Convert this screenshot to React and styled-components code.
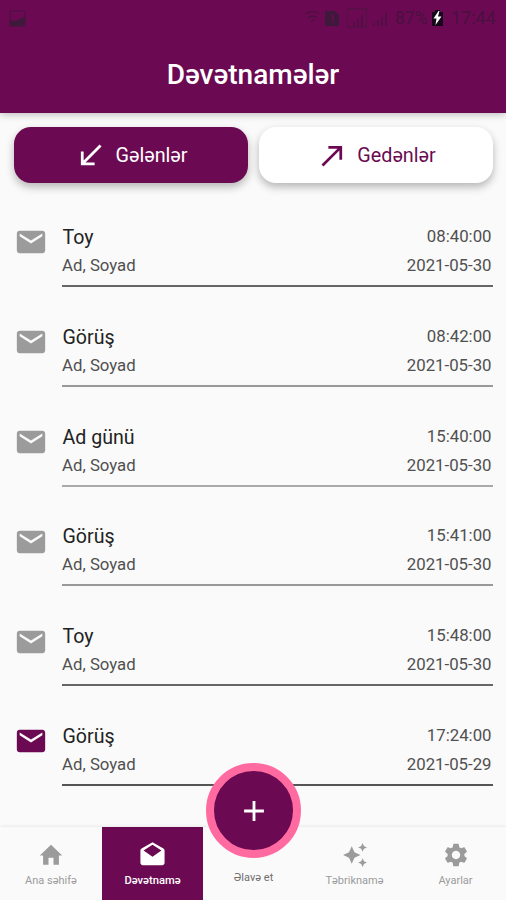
import React from "react";
import styled, { createGlobalStyle } from "styled-components";

const PLUM = "#6b0a52";

const GlobalStyle = createGlobalStyle`
  *, *::before, *::after { box-sizing: border-box; }
  html, body { margin: 0; padding: 0; background: #fafafa; }
  body { font-family: Roboto, "Noto Sans", sans-serif; }
`;

const Screen = styled.div`
  position: relative;
  display: flex;
  flex-direction: column;
  width: 506px;
  height: 900px;
  overflow: hidden;
  background: #fafafa;
`;

const Header = styled.header`
  flex: none;
  height: 113px;
  background: ${PLUM};
  box-shadow: 0 1px 8px rgba(0, 0, 0, 0.28);
`;

const StatusBar = styled.div`
  display: flex;
  align-items: center;
  height: 36px;
  padding: 0 9px 0 9px;
  color: #491040;
  font-size: 18px;
  line-height: 36px;
`;

const StatusIcons = styled.div`
  display: flex;
  align-items: center;
  margin-left: auto;
`;

const StatusText = styled.span`
  width: ${(p) => p.$width}px;
  margin-left: ${(p) => p.$gap || 0}px;
  font-size: ${(p) => p.$size || 18}px;
  white-space: nowrap;
`;

const Title = styled.h1`
  margin: 0;
  height: 77px;
  color: #fff;
  font-size: 28px;
  font-weight: 500;
  line-height: 78px;
  text-align: center;
`;

const Tabs = styled.div`
  display: grid;
  grid-template-columns: 234px 234px;
  column-gap: 11px;
  padding: 14px 13px 0 14px;
`;

const Tab = styled.button`
  display: flex;
  align-items: center;
  justify-content: center;
  gap: 8px;
  height: 56px;
  padding: 0;
  border: 0;
  border-radius: 17px;
  background: ${(p) => (p.$active ? PLUM : "#fff")};
  color: ${(p) => (p.$active ? "#fff" : PLUM)};
  box-shadow: 0 4px 8px rgba(0, 0, 0, 0.28);
  font: 400 19.8px Roboto, "Noto Sans", sans-serif;
`;

const List = styled.ul`
  margin: 38px 13.5px 0 14px;
  padding: 0;
  list-style: none;
`;

const Item = styled.li`
  display: flex;
  gap: 15px;
  height: 99.8px;
`;

const MailSlot = styled.div`
  width: 33px;
  height: 34px;
  padding-top: 4.4px;
  color: ${(p) => (p.$unread ? PLUM : "#9b9b9b")};
`;

const Details = styled.div`
  display: grid;
  grid-template-columns: 1fr auto;
  grid-template-rows: 30px 26px;
  flex: 1;
  height: 66px;
  border-bottom: 2px solid ${(p) => p.$line};
  color: #505050;
  font-size: 16.8px;
  line-height: 28px;
`;

const Name = styled.span`
  padding-left: 0.5px;
  color: #222;
  font-size: 19.6px;
  line-height: 33.5px;
`;

const Time = styled.span`
  line-height: 31px;
  text-align: right;
  padding-right: 1px;
`;

const Person = styled.span`
  line-height: 28px;
`;

const DateText = styled.span`
  line-height: 28px;
  text-align: right;
  padding-right: 1px;
`;

const NavBar = styled.nav`
  display: grid;
  grid-template-columns: 102px repeat(4, 101px);
  height: 73px;
  margin-top: auto;
  background: #fafafa;
  box-shadow: 0 -1px 3px rgba(0, 0, 0, 0.07);
`;

const NavItem = styled.button`
  display: flex;
  flex-direction: column;
  align-items: center;
  padding: 13px 0 0;
  border: 0;
  background: ${(p) => (p.$active ? PLUM : "transparent")};
  color: ${(p) => (p.$active ? "#fff" : "#9b9b9b")};
  font: 400 11px Roboto, "Noto Sans", sans-serif;
`;

const NavIcon = styled.span`
  display: flex;
  align-items: center;
  justify-content: center;
  height: 30px;
  margin-bottom: 4px;
`;

const NavLabel = styled.span`
  line-height: 13px;
  font-size: ${(p) => (p.$active ? 11.2 : 11)}px;
  font-weight: ${(p) => (p.$active ? 500 : 400)};
  color: ${(p) => (p.$dark ? "#6f6f6f" : "inherit")};
  margin-top: ${(p) => (p.$dark ? -3 : 0)}px;
`;

const AddButton = styled.button`
  position: absolute;
  left: 206px;
  top: 763px;
  display: flex;
  align-items: center;
  justify-content: center;
  width: 95px;
  height: 95px;
  padding: 0;
  border: 8px solid #ff6ba1;
  border-radius: 50%;
  background: ${PLUM};
  color: #fff;
`;

const PATHS = {
  southWest: "M15 19v-2H8.41L20 5.41 18.59 4 7 15.59V9H5v10z",
  northEast: "M9 5v2h6.59L4 18.59 5.41 20 17 8.41V15h2V5z",
  mail: "M20 4H4c-1.1 0-1.99.9-1.99 2L2 18c0 1.1.9 2 2 2h16c1.1 0 2-.9 2-2V6c0-1.1-.9-2-2-2zm0 4l-8 5-8-5V6l8 5 8-5v2z",
  home: "M9.7 21v-6.5h4.6V21h5v-8.5h3L12 2.5 1.7 12.5h3V21z",
  drafts: "M21.99 8c0-.72-.37-1.35-.94-1.7L12 1 2.95 6.3C2.38 6.65 2 7.28 2 8v10c0 1.1.9 2 2 2h16c1.1 0 2-.9 2-2l-.01-10zM12 13L4.6 7.9 12 3l7.4 4.9L12 13z",
  sparkle: "M19 9l1.25-2.75L23 5l-2.75-1.25L19 1l-1.25 2.75L15 5l2.75 1.25L19 9zm-7.5.5L9 4 6.5 9.5 1 12l5.5 2.5L9 20l2.5-5.5L17 12l-5.5-2.5zM19 15l-1.25 2.75L15 19l2.75 1.25L19 23l1.25-2.75L23 19l-2.75-1.25L19 15z",
  settings: "M19.14 12.94c.04-.3.06-.61.06-.94 0-.32-.02-.64-.07-.94l2.03-1.58c.18-.14.23-.41.12-.61l-1.92-3.32c-.12-.22-.37-.29-.59-.22l-2.39.96c-.5-.38-1.03-.7-1.62-.94l-.36-2.54c-.04-.24-.24-.41-.48-.41h-3.84c-.24 0-.43.17-.47.41l-.36 2.54c-.59.24-1.13.57-1.62.94l-2.39-.96c-.22-.08-.47 0-.59.22L2.74 8.87c-.12.21-.08.47.12.61l2.03 1.58c-.05.3-.09.63-.09.94s.02.64.07.94l-2.03 1.58c-.18.14-.23.41-.12.61l1.92 3.32c.12.22.37.29.59.22l2.39-.96c.5.38 1.03.7 1.62.94l.36 2.54c.05.24.24.41.48.41h3.84c.24 0 .44-.17.47-.41l.36-2.54c.59-.24 1.13-.56 1.62-.94l2.39.96c.22.08.47 0 .59-.22l1.92-3.32c.12-.22.07-.47-.12-.61l-2.01-1.58zM12 15.6c-1.98 0-3.6-1.62-3.6-3.6s1.62-3.6 3.6-3.6 3.6 1.62 3.6 3.6-1.62 3.6-3.6 3.6z",
  plus: "M19 13h-6v6h-2v-6H5v-2h6V5h2v6h6v2z",
};

const Icon = ({ name, size }) => (
  <svg width={size} height={size} viewBox="0 0 24 24" fill="currentColor" aria-hidden="true">
    <path d={PATHS[name]} />
  </svg>
);

const PictureIcon = () => (
  <svg width="17" height="17" viewBox="0 0 17 17" fill="none" aria-hidden="true">
    <rect x="1" y="1" width="15" height="15" stroke="#4c1041" />
    <path d="M1 10l4 1 4-1 3-2 4-1v9H1z" fill="#3e193b" />
  </svg>
);

const SignalIcons = () => (
  <svg width="88" height="24" viewBox="0 0 88 24" aria-hidden="true">
    <g fill="none" stroke="#4c1041" strokeWidth="1.5">
      <path d="M2 8q7-5 13 0M4 12q5-4 9 0M7 15q2-2 3 0" />
      <path d="M43.5 3h19v18h-19z" stroke="#581047" />
      <path d="M50 20v-4M54 20v-7M58 20V9M70 20v-3M74 20v-6M78 20v-9M82 20V6" />
    </g>
    <path d="M21 5h10l4 4v11H21z" fill="#3e193b" />
    <path d="M27 10l2-1v7" fill="none" stroke="#6b0a52" strokeWidth="1.5" />
  </svg>
);

const BatteryIcon = () => (
  <svg width="11" height="18" viewBox="0 0 11 18" aria-hidden="true">
    <path d="M3 1h5v2h3v14H0V3h3z" fill="#16071a" />
    <path d="M6.5 2L1.5 9.5h3L3.5 16 9.5 7.5h-3.5L7.5 2z" fill="#fff" />
  </svg>
);

const INVITES = [
  { name: "Toy", time: "08:40:00", date: "2021-05-30", line: "#666" },
  { name: "Görüş", time: "08:42:00", date: "2021-05-30", line: "#999" },
  { name: "Ad günü", time: "15:40:00", date: "2021-05-30", line: "#aaa" },
  { name: "Görüş", time: "15:41:00", date: "2021-05-30", line: "#999" },
  { name: "Toy", time: "15:48:00", date: "2021-05-30", line: "#666" },
  { name: "Görüş", time: "17:24:00", date: "2021-05-29", line: "#555", unread: true },
];

const NAV = [
  { label: "Ana səhifə", icon: "home", size: 26 },
  { label: "Dəvətnamə", icon: "drafts", size: 29, active: true },
  { label: "Əlavə et", dark: true },
  { label: "Təbriknamə", icon: "sparkle", size: 26 },
  { label: "Ayarlar", icon: "settings", size: 28 },
];

export default function App() {
  return (
    <Screen>
      <GlobalStyle />
      <Header>
        <StatusBar>
          <PictureIcon />
          <StatusIcons>
            <SignalIcons />
            <StatusText $width={37} $gap={3} $size={17.5}>87%</StatusText>
            <BatteryIcon />
            <StatusText $width={46} $gap={8}>17:44</StatusText>
          </StatusIcons>
        </StatusBar>
        <Title>Dəvətnamələr</Title>
      </Header>
      <Tabs>
        <Tab $active><Icon name="southWest" size={33} />Gələnlər</Tab>
        <Tab><Icon name="northEast" size={33} />Gedənlər</Tab>
      </Tabs>
      <List>
        {INVITES.map((it) => (
          <Item key={it.time}>
            <MailSlot $unread={it.unread}><Icon name="mail" size={34} /></MailSlot>
            <Details $line={it.line}>
              <Name>{it.name}</Name>
              <Time>{it.time}</Time>
              <Person>Ad, Soyad</Person>
              <DateText>{it.date}</DateText>
            </Details>
          </Item>
        ))}
      </List>
      <NavBar>
        {NAV.map((n) => (
          <NavItem key={n.label} $active={n.active}>
            <NavIcon>{n.icon && <Icon name={n.icon} size={n.size} />}</NavIcon>
            <NavLabel $dark={n.dark} $active={n.active}>{n.label}</NavLabel>
          </NavItem>
        ))}
      </NavBar>
      <AddButton aria-label="Əlavə et"><Icon name="plus" size={34} /></AddButton>
    </Screen>
  );
}
